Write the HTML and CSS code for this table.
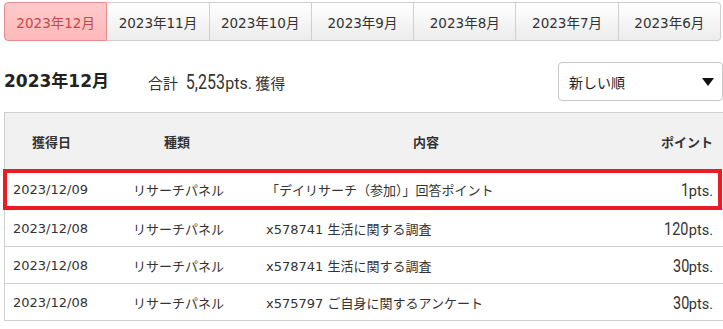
FILE: index.html
```html
<!DOCTYPE html>
<html lang="ja">
<head>
<meta charset="utf-8">
<title>ポイント獲得履歴</title>
<link rel="stylesheet" href="styles.css">
</head>
<body>
<div class="page">
  <nav class="tabs">
    <a class="tab active">2023年12月</a>
    <a class="tab">2023年11月</a>
    <a class="tab">2023年10月</a>
    <a class="tab">2023年9月</a>
    <a class="tab">2023年8月</a>
    <a class="tab">2023年7月</a>
    <a class="tab">2023年6月</a>
  </nav>

  <div class="summary-bar">
    <h2 class="month">2023年12月</h2>
    <p class="total">合計 <span class="num">5,253</span><span class="unit">pts.</span> 獲得</p>
    <div class="select"><span>新しい順</span><i class="caret"></i></div>
  </div>

  <div class="table">
    <div class="row head">
      <div class="cell c-date">獲得日</div>
      <div class="cell c-type">種類</div>
      <div class="cell c-body">内容</div>
      <div class="cell c-pts">ポイント</div>
    </div>
    <div class="row first marked">
      <div class="cell c-date">2023/12/09</div>
      <div class="cell c-type">リサーチパネル</div>
      <div class="cell c-body">「デイリサーチ（参加）」回答ポイント</div>
      <div class="cell c-pts"><span class="num">1</span><span class="unit">pts.</span></div>
    </div>
    <div class="row">
      <div class="cell c-date">2023/12/08</div>
      <div class="cell c-type">リサーチパネル</div>
      <div class="cell c-body">x578741 生活に関する調査</div>
      <div class="cell c-pts"><span class="num">120</span><span class="unit">pts.</span></div>
    </div>
    <div class="row">
      <div class="cell c-date">2023/12/08</div>
      <div class="cell c-type">リサーチパネル</div>
      <div class="cell c-body">x578741 生活に関する調査</div>
      <div class="cell c-pts"><span class="num">30</span><span class="unit">pts.</span></div>
    </div>
    <div class="row">
      <div class="cell c-date">2023/12/08</div>
      <div class="cell c-type">リサーチパネル</div>
      <div class="cell c-body">x575797 ご自身に関するアンケート</div>
      <div class="cell c-pts"><span class="num">30</span><span class="unit">pts.</span></div>
    </div>
  </div>
</div>
</body>
</html>
```

FILE: styles.css
```css
html, body {
  margin: 0;
  padding: 0;
  background: #fff;
  overflow: hidden;
}
body {
  font-family: "DejaVu Sans", "Noto Sans CJK JP", sans-serif;
  color: #333;
  font-size: 13px;
}
.page {
  width: 719px;
  padding: 2px 0 0 4px;
}

/* tabs */
.tabs {
  display: flex;
  width: 717px;
  height: 39px;
  box-sizing: border-box;
}
.tab {
  flex: 1;
  display: flex;
  align-items: center;
  justify-content: center;
  font-size: 13.5px;
  color: #333;
  background: linear-gradient(#ffffff, #ececec);
  border: 1px solid #cfcfcf;
  border-left: none;
  white-space: nowrap;
}
.tab:first-child {
  border-left: 1px solid #cfcfcf;
  border-radius: 4px 0 0 4px;
}
.tab:last-child {
  border-radius: 0 4px 4px 0;
}
.tab.active {
  background: linear-gradient(#ffcaca, #ffb9b9);
  border: 1px solid #e88c8c;
  color: #c2484d;
}

/* summary */
.summary-bar {
  display: flex;
  align-items: center;
  height: 39px;
  margin: 21px 0 11px;
}
.month {
  margin: 0;
  font-size: 17px;
  font-weight: bold;
  color: #222;
  line-height: 1;
}
.total {
  margin: 0 0 0 39px;
  font-size: 15px;
  font-family: "Noto Sans CJK JP", sans-serif;
  color: #333;
  white-space: nowrap;
}
.num {
  display: inline-block;
  font-family: "Roboto", sans-serif;
  font-size: 18px;
  transform: scaleX(0.8);
  transform-origin: right bottom;
}
.unit {
  font-family: "Roboto", sans-serif;
  font-size: 14.5px;
}
.total .num {
  font-size: 20px;
  margin-left: -5px;
}
.total .unit {
  font-size: 16px;
}
.select {
  margin-left: auto;
  width: 165px;
  height: 39px;
  box-sizing: border-box;
  border: 1px solid #c8c8c8;
  border-radius: 4px;
  display: flex;
  align-items: center;
  justify-content: space-between;
  padding: 0 8px 0 10px;
  font-family: "Noto Sans CJK JP", sans-serif;
  font-size: 14px;
  color: #222;
}
.caret {
  width: 0;
  height: 0;
  border-left: 6px solid transparent;
  border-right: 6px solid transparent;
  border-top: 8px solid #111;
}

/* table */
.table {
  border-top: 1px solid #cfcfcf;
  border-left: 1px solid #cfcfcf;
}
.row {
  display: grid;
  grid-template-columns: 120px 133px 1fr 120px;
  align-items: center;
  height: 37px;
  box-sizing: border-box;
  border-bottom: 1px solid #cfcfcf;
  position: relative;
}
.row.head {
  height: 56px;
  background: #f1f1f1;
  border-bottom: none;
  font-weight: bold;
  font-family: "Noto Sans CJK JP", sans-serif;
  color: #333;
}
.row.first {
  height: 41px;
}
.cell {
  padding: 0 8px;
  white-space: nowrap;
}
.c-pts {
  text-align: right;
  padding-right: 10px;
}
.head .c-date { padding-left: 27px; }
.head .c-type { padding-left: 39px; }
.head .c-body { text-align: center; padding-right: 17px; }

.row.marked::after {
  content: "";
  position: absolute;
  top: 0;
  left: -2px;
  right: 1px;
  bottom: -1px;
  border: 4px solid #ec1c24;
  pointer-events: none;
}
```
